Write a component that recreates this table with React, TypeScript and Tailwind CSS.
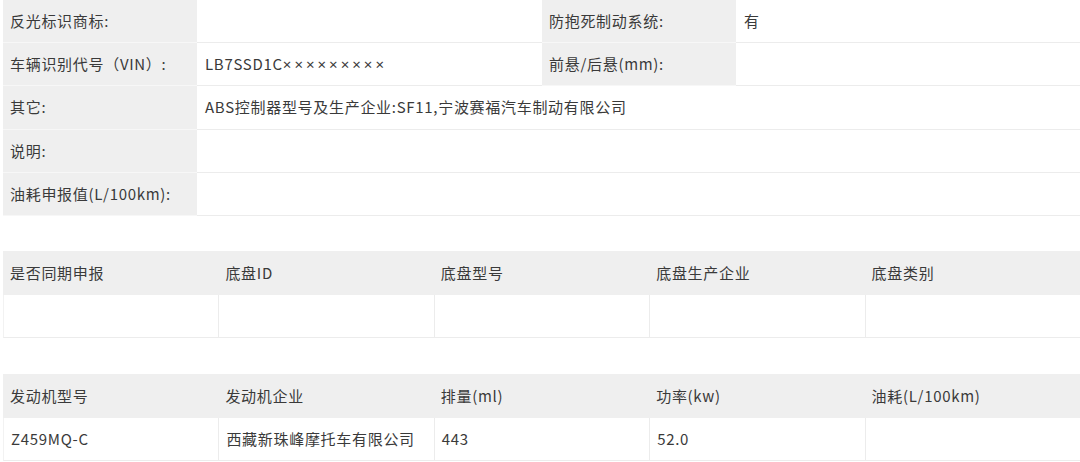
const font = { fontFamily: '"Noto Sans CJK SC", "Microsoft YaHei", sans-serif' };

function Label({ children, h = "h-[43px]" }: { children?: React.ReactNode; h?: string }) {
  return (
    <div className={`${h} flex items-center border-b border-[#f7f7f7] bg-[#efefef] pl-[7px] text-[15px] tracking-[0.7px] text-[#3a3a3a]`}>
      {children}
    </div>
  );
}

function Value({ children, h = "h-[43px]", span = "" }: { children?: React.ReactNode; h?: string; span?: string }) {
  return (
    <div className={`${h} ${span} flex items-center border-b border-[#ececec] bg-white pl-[8px] text-[15px] tracking-[0.7px] text-[#3a3a3a]`}>
      {children}
    </div>
  );
}

function GridTable({ head, body }: { head: string[]; body: string[] }) {
  return (
    <div className="grid grid-cols-5">
      {head.map((h, i) => (
        <div key={i} className="flex h-[44px] items-center bg-[#efefef] pl-[7px] text-[15px] tracking-[0.7px] text-[#3a3a3a]">
          {h}
        </div>
      ))}
      {body.map((b, i) => (
        <div
          key={i}
          className={`flex h-[43px] items-center border-b border-[#ececec] bg-white pl-[7px] text-[15px] tracking-[0.7px] text-[#3a3a3a] ${
            i > 0 ? "border-l" : ""
          } ${i === 0 ? "border-l border-l-[#f2f2f2]" : ""}`}
        >
          {b}
        </div>
      ))}
    </div>
  );
}

export default function App() {
  return (
    <div className="h-[462px] w-[1080px] overflow-hidden bg-white pl-[3px]" style={font}>
      <div className="grid grid-cols-[194px_345px_194px_1fr]">
        <Label>反光标识商标:</Label>
        <Value />
        <Label>防抱死制动系统:</Label>
        <Value>有</Value>

        <Label>车辆识别代号（VIN）:</Label>
        <Value>
          LB7SSD1C
          <span className="tracking-[3px]" style={{ fontFamily: '"Noto Sans", sans-serif' }}>
            ×××××××××
          </span>
        </Value>
        <Label>前悬/后悬(mm):</Label>
        <Value />

        <Label h="h-[44px]">其它:</Label>
        <Value h="h-[44px]" span="col-span-3">
          ABS控制器型号及生产企业:SF11,宁波赛福汽车制动有限公司
        </Value>

        <Label>说明:</Label>
        <Value span="col-span-3" />

        <Label>油耗申报值(L/100km):</Label>
        <Value span="col-span-3" />
      </div>

      <div className="mt-[35px]">
        <GridTable head={["是否同期申报", "底盘ID", "底盘型号", "底盘生产企业", "底盘类别"]} body={["", "", "", "", ""]} />
      </div>

      <div className="mt-[36px]">
        <GridTable
          head={["发动机型号", "发动机企业", "排量(ml)", "功率(kw)", "油耗(L/100km)"]}
          body={["Z459MQ-C", "西藏新珠峰摩托车有限公司", "443", "52.0", ""]}
        />
      </div>
    </div>
  );
}
